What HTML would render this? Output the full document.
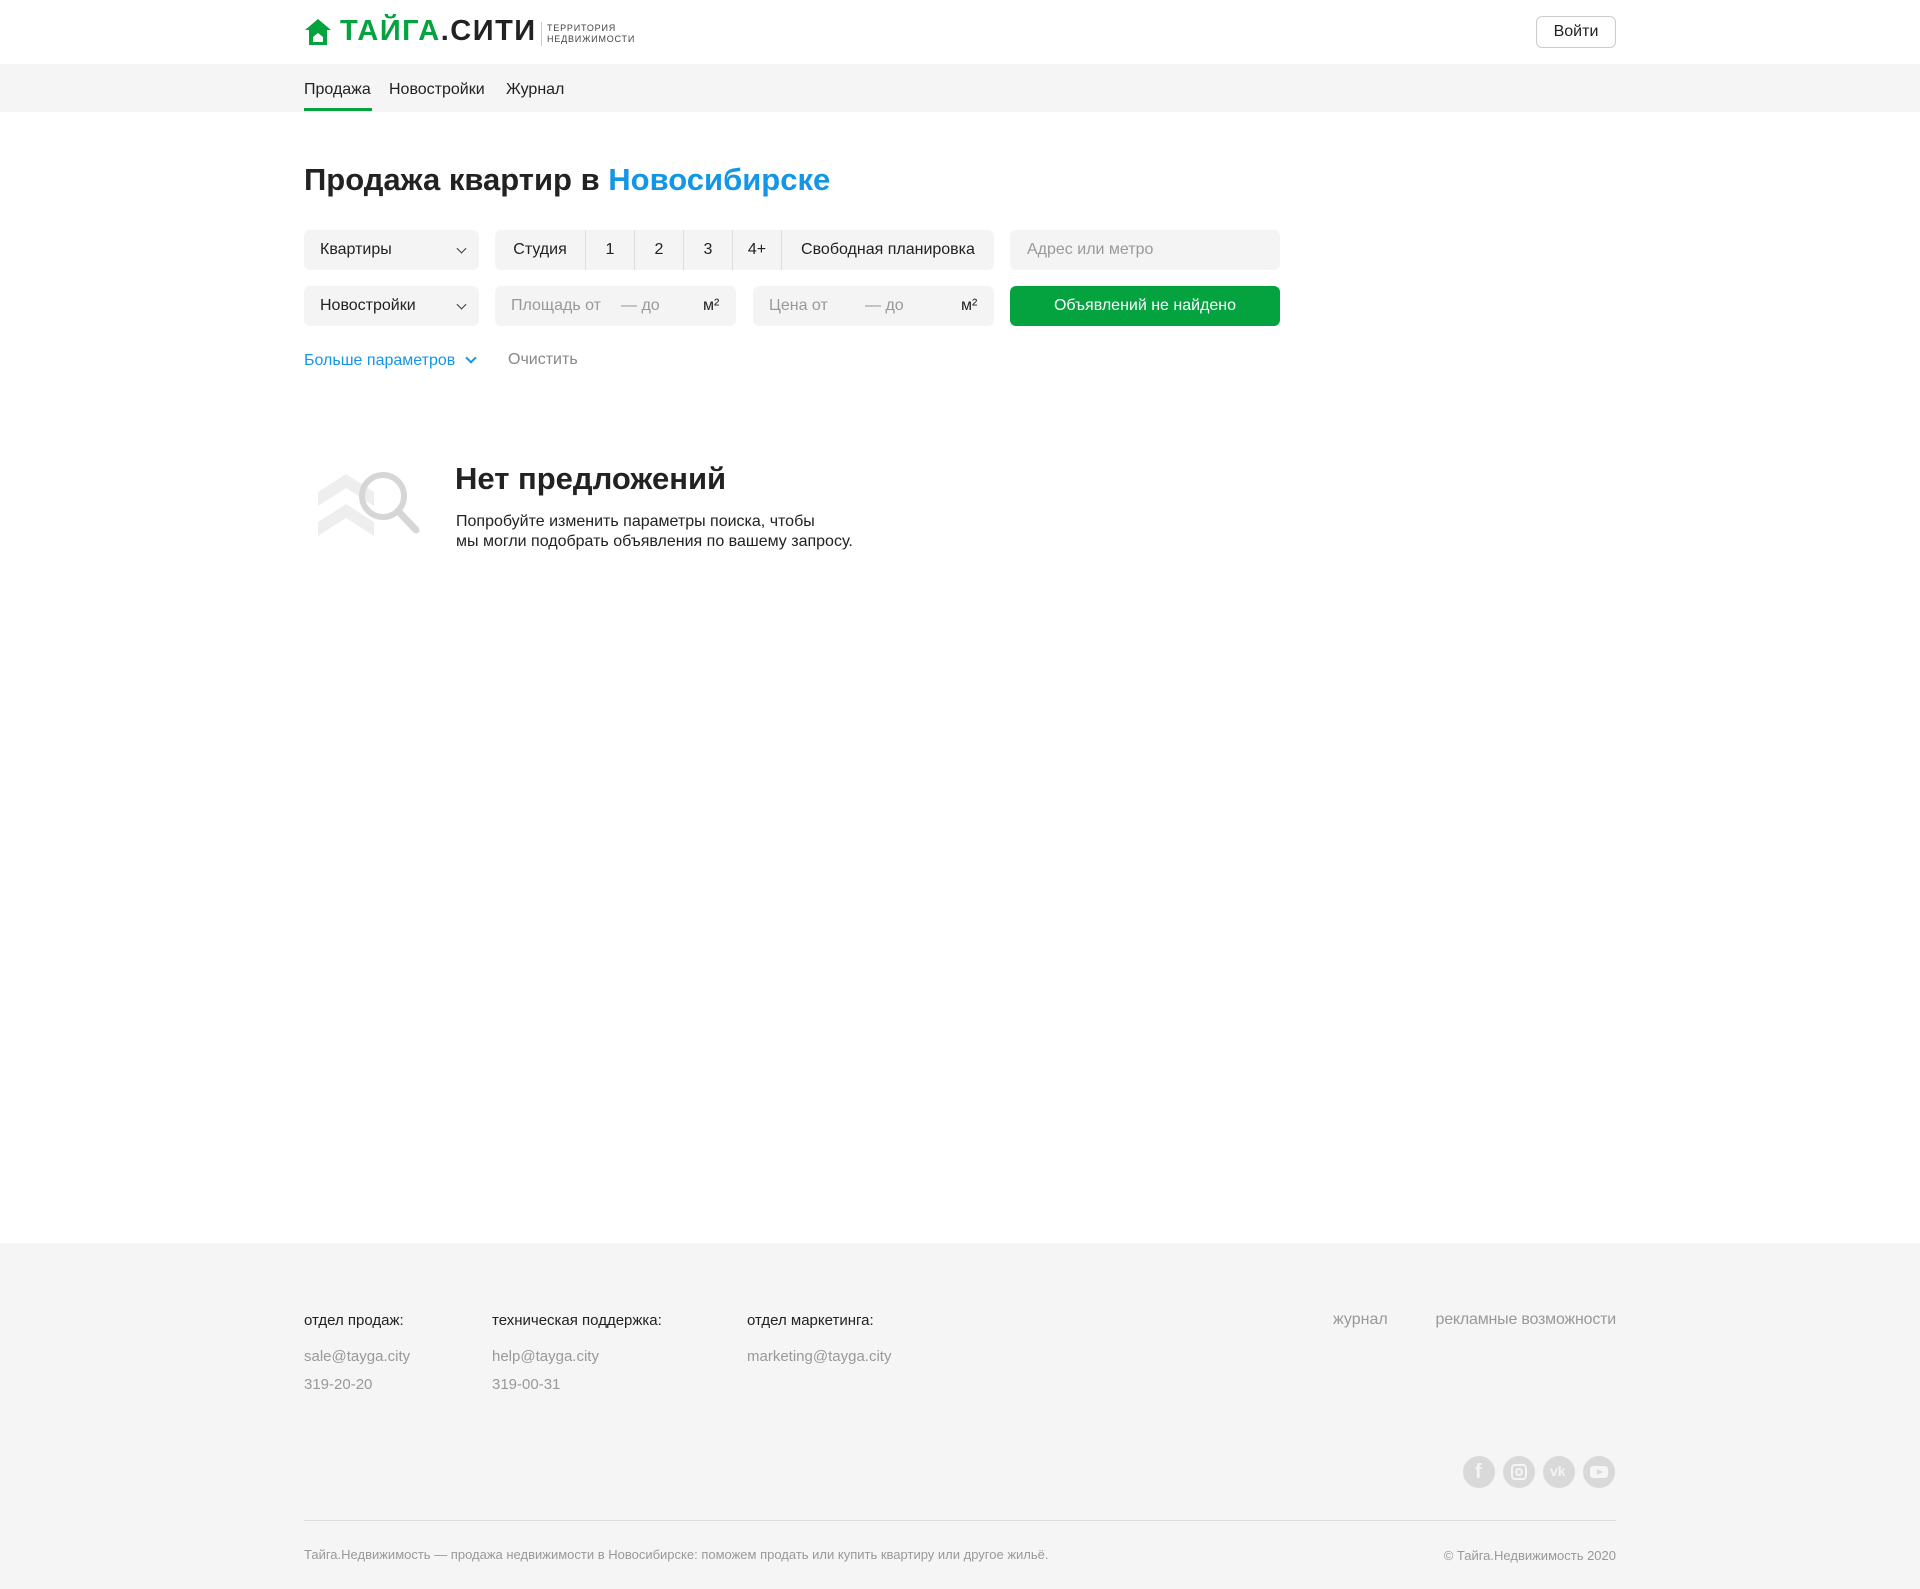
<!DOCTYPE html>
<html><head><meta charset="utf-8"><style>
*{box-sizing:border-box;margin:0;padding:0}
body{width:1920px;height:1589px;position:relative;background:#fff;font-family:"Liberation Sans",Arial,sans-serif;color:#222;overflow:hidden}
.a{position:absolute}
.box{position:absolute;background:#f4f4f4;border-radius:6px;font-size:16px;display:flex;align-items:center}
.ph{color:#999}
.chev{position:absolute;right:14px;top:50%;width:7px;height:7px;border-right:1.5px solid #333;border-bottom:1.5px solid #333;transform:translateY(-70%) rotate(45deg)}
.seg{height:100%;display:flex;align-items:center;justify-content:center;border-left:1px solid #ddd}
.f{font-size:15px}
.g{color:#999}
.soc{position:absolute;top:1456px;width:32px;height:32px;border-radius:50%;background:#d9d9d9}
</style></head><body>
<!-- header -->
<svg class="a" style="left:304px;top:18px" width="28" height="28" viewBox="0 0 28 28"><path d="M14 1 L27 12 L23 12 L23 27 L5 27 L5 12 L1 12 Z" fill="#04a340"/><path d="M9 19 L14 15 L19 19 L19 24 L9 24Z" fill="#fff"/></svg>
<div class="a" style="left:340px;top:15px;font-size:29px;font-weight:bold;letter-spacing:1.5px;color:#04a340">ТАЙГА<span style="color:#222">.СИТИ</span></div>
<div class="a" style="left:541px;top:22px;width:1px;height:24px;background:#ccc"></div>
<div class="a" style="left:547px;top:23px;font-size:9px;line-height:11px;color:#444;letter-spacing:.8px">ТЕРРИТОРИЯ<br>НЕДВИЖИМОСТИ</div>
<div class="a" style="left:1536px;top:16px;width:80px;height:32px;border:1px solid #ccc;border-radius:6px;font-size:16px;display:flex;align-items:center;justify-content:center">Войти</div>
<div class="a" style="left:0;top:64px;width:1920px;height:48px;background:#f5f5f5"></div>
<div class="a" style="left:304px;top:81px;font-size:16px">Продажа</div>
<div class="a" style="left:304px;top:108px;width:68px;height:3px;background:#04a340"></div>
<div class="a" style="left:389px;top:81px;font-size:16px">Новостройки</div>
<div class="a" style="left:506px;top:81px;font-size:16px">Журнал</div>
<!-- title -->
<div class="a" style="left:304px;top:162px;font-size:31px;font-weight:bold">Продажа квартир в <span style="color:#1496e6">Новосибирске</span></div>
<!-- row1 -->
<div class="box" style="left:304px;top:230px;width:175px;height:40px;padding-left:16px">Квартиры<i class="chev"></i></div>
<div class="box" style="left:495px;top:230px;width:499px;height:40px;overflow:hidden">
<div class="seg" style="width:90px;border:0">Студия</div><div class="seg" style="width:49px">1</div><div class="seg" style="width:49px">2</div><div class="seg" style="width:49px">3</div><div class="seg" style="width:49px">4+</div><div class="seg" style="width:213px">Свободная планировка</div></div>
<div class="box ph" style="left:1010px;top:230px;width:270px;height:40px;padding-left:17px">Адрес или метро</div>
<!-- row2 -->
<div class="box" style="left:304px;top:286px;width:175px;height:40px;padding-left:16px">Новостройки<i class="chev"></i></div>
<div class="box" style="left:495px;top:286px;width:241px;height:40px"><span class="a ph" style="left:16px">Площадь от</span><span class="a ph" style="left:126px">— до</span><span class="a" style="left:208px">м²</span></div>
<div class="box" style="left:753px;top:286px;width:241px;height:40px"><span class="a ph" style="left:16px">Цена от</span><span class="a ph" style="left:112px">— до</span><span class="a" style="left:208px">м²</span></div>
<div class="box" style="left:1010px;top:286px;width:270px;height:40px;background:#04a340;color:#fff;justify-content:center">Объявлений не найдено</div>
<div class="a" style="left:304px;top:352px;font-size:16px;color:#1496e6">Больше параметров</div>
<div class="a" style="left:467px;top:354px;width:8px;height:8px;border-right:2px solid #1496e6;border-bottom:2px solid #1496e6;transform:rotate(45deg)"></div>
<div class="a" style="left:508px;top:351px;font-size:16px;color:#888">Очистить</div>
<!-- empty -->
<svg class="a" style="left:316px;top:462px" width="106" height="80" viewBox="0 0 106 80">
<path d="M2 30 L30 12 L58 30 L58 44 L30 26 L2 44Z" fill="#eee"/><path d="M2 60 L30 42 L58 60 L58 74 L30 56 L2 74Z" fill="#eee"/>
<circle cx="67" cy="34" r="21" fill="none" stroke="#d6d6d6" stroke-width="6"/><path d="M82 49 L100 68" stroke="#d6d6d6" stroke-width="7" stroke-linecap="round"/></svg>
<div class="a" style="left:455px;top:461px;font-size:31px;font-weight:bold">Нет предложений</div>
<div class="a" style="left:456px;top:512px;font-size:16px;line-height:20px">Попробуйте изменить параметры поиска, чтобы<br>мы могли подобрать объявления по вашему запросу.</div>
<!-- footer -->
<div class="a" style="left:0;top:1243px;width:1920px;height:346px;background:#f5f5f5"></div>
<div class="a f" style="left:304px;top:1312px">отдел продаж:</div>
<div class="a f g" style="left:304px;top:1343px;line-height:28px">sale@tayga.city<br>319-20-20</div>
<div class="a f" style="left:492px;top:1312px">техническая поддержка:</div>
<div class="a f g" style="left:492px;top:1343px;line-height:28px">help@tayga.city<br>319-00-31</div>
<div class="a f" style="left:747px;top:1312px">отдел маркетинга:</div>
<div class="a f g" style="left:747px;top:1343px;line-height:28px">marketing@tayga.city</div>
<div class="a g" style="left:1333px;top:1311px;font-size:16px">журнал</div>
<div class="a g" style="right:304px;top:1311px;font-size:16px;letter-spacing:-.2px">рекламные возможности</div>
<div class="soc" style="left:1463px"><span class="a" style="left:12px;top:5px;color:#f5f5f5;font-weight:bold;font-size:20px">f</span></div>
<div class="soc" style="left:1503px"><span class="a" style="left:8px;top:8px;width:16px;height:16px;border:2px solid #f5f5f5;border-radius:4px"></span><span class="a" style="left:12px;top:12px;width:8px;height:8px;border:2px solid #f5f5f5;border-radius:50%"></span></div>
<div class="soc" style="left:1543px"><span class="a" style="left:7px;top:7px;color:#f5f5f5;font-weight:bold;font-size:14px">vk</span></div>
<div class="soc" style="left:1583px"><span class="a" style="left:7px;top:10px;width:18px;height:12px;background:#f5f5f5;border-radius:3px"></span><span class="a" style="left:14px;top:13px;border-left:6px solid #d9d9d9;border-top:3px solid transparent;border-bottom:3px solid transparent"></span></div>
<div class="a" style="left:304px;top:1520px;width:1312px;height:1px;background:#ddd"></div>
<div class="a g" style="left:304px;top:1547px;font-size:13px">Тайга.Недвижимость — продажа недвижимости в Новосибирске: поможем продать или купить квартиру или другое жильё.</div>
<div class="a g" style="right:304px;top:1548px;font-size:13px">© Тайга.Недвижимость 2020</div>
</body></html>
